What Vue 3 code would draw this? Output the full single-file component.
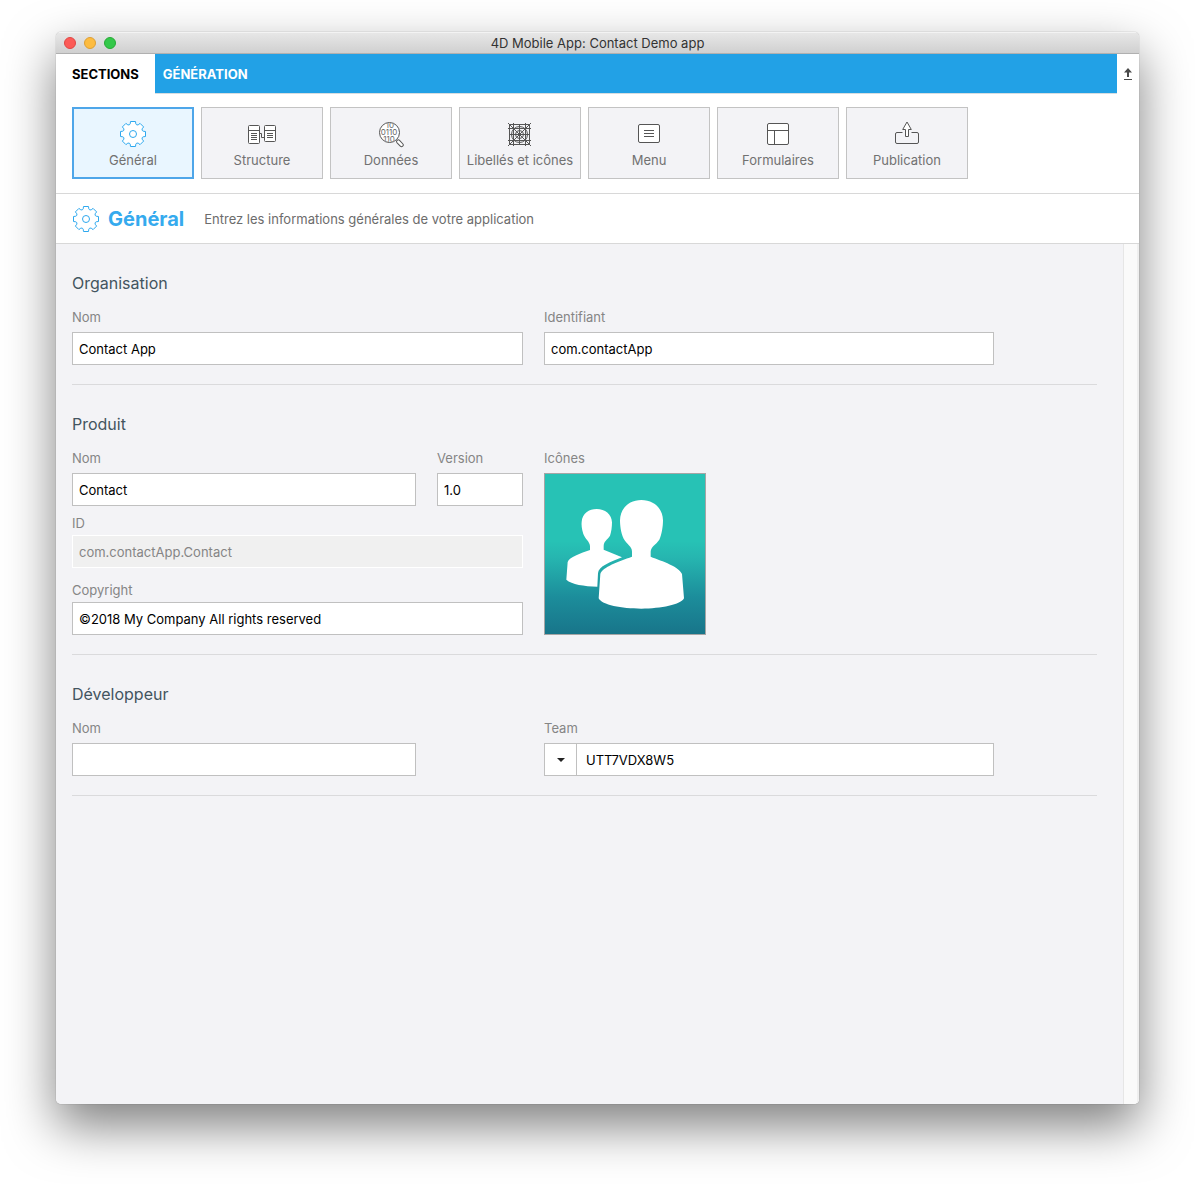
<script setup>
import { ref } from 'vue'

const sections = [
  { id: 'general', label: 'Général' },
  { id: 'structure', label: 'Structure' },
  { id: 'data', label: 'Données' },
  { id: 'labels', label: 'Libellés et icônes' },
  { id: 'menu', label: 'Menu' },
  { id: 'forms', label: 'Formulaires' },
  { id: 'publish', label: 'Publication' },
]
const current = ref('general')

const form = ref({
  orgName: 'Contact App',
  orgId: 'com.contactApp',
  productName: 'Contact',
  version: '1.0',
  productId: 'com.contactApp.Contact',
  copyright: '©2018 My Company All rights reserved',
  developer: '',
  team: 'UTT7VDX8W5',
})

// Eight-toothed gear outline centred on 0,0
const tooth = [[-3.6, -9.2], [-2.8, -10.2], [-2.5, -12.5], [2.5, -12.5], [2.8, -10.2], [3.6, -9.2]]
const gear = 'M' + Array.from({ length: 8 }, (_, k) => {
  const a = (k * Math.PI) / 4
  return tooth
    .map(([x, y]) => `${(x * Math.cos(a) - y * Math.sin(a)).toFixed(2)} ${(x * Math.sin(a) + y * Math.cos(a)).toFixed(2)}`)
    .join('L')
}).join('L') + 'Z'
</script>

<template>
  <div class="desktop">
    <div class="window">
      <header class="titlebar">
        <div class="lights">
          <button class="light close" aria-label="Fermer"></button>
          <button class="light minimize" aria-label="Réduire"></button>
          <button class="light zoom" aria-label="Agrandir"></button>
        </div>
        <span class="caption">4D Mobile App: Contact Demo app</span>
      </header>

      <nav class="tabs">
        <button class="tab active">SECTIONS</button>
        <div class="tab-rest">
          <button class="tab">GÉNÉRATION</button>
        </div>
        <button class="collapse" aria-label="Replier">
          <svg width="10" height="12" viewBox="0 0 10 12">
            <path d="M5 0L9 4.500H6V9H4V4.500H1Z" fill="#4a4a4a" />
            <path d="M1 11.500H9" stroke="#4a4a4a" />
          </svg>
        </button>
      </nav>

      <nav class="toolbar">
        <button
          v-for="s in sections"
          :key="s.id"
          class="card"
          :class="{ selected: s.id === current }"
          @click="current = s.id"
        >
          <svg class="icon" width="36" height="28" viewBox="0 0 36 28">
            <g v-if="s.id === 'general'" transform="translate(18 14)" class="blue">
              <path :d="gear" />
              <circle r="3.500" />
            </g>
            <g v-else-if="s.id === 'structure'">
              <rect x="4.500" y="5.500" width="11" height="18" rx="1" />
              <rect x="20.500" y="5.500" width="11" height="16" rx="1" />
              <path d="M4.500 10.500H15.500M7 13.500H13M7 15.500H13M7 17.500H13M7 19.500H13M20.500 10.500H31.500M23 13.500H29M23 15.500H29M23 17.500H29M16 13.500H17.500V17.500H20" />
            </g>
            <g v-else-if="s.id === 'data'">
              <clipPath id="lens"><circle cx="16.500" cy="12.500" r="9.500" /></clipPath>
              <circle cx="16.500" cy="12.500" r="10" />
              <g clip-path="url(#lens)" class="digits">
                <text x="17" y="8">10</text>
                <text x="16" y="15">0110</text>
                <text x="16" y="22">110</text>
              </g>
              <rect x="11" y="-1.700" width="8" height="3.400" rx="1.700" transform="translate(16.500 12.500) rotate(46)" />
            </g>
            <g v-else-if="s.id === 'labels'">
              <rect x="7.500" y="4.500" width="20" height="20" class="clear" />
              <path d="M11.500 3V26M17.500 4V25M23.500 3V26M6 8.500H29M7 14.500H28M6 20.500H29M6 3L29 26M29 3L6 26" />
              <circle cx="17.500" cy="14.500" r="8" class="clear" />
              <circle cx="17.500" cy="14.500" r="4" class="clear" />
            </g>
            <g v-else-if="s.id === 'menu'">
              <rect x="7.500" y="4.500" width="21" height="18" rx="1.500" />
              <path d="M13 10.500H23M13 13.500H23M13 16.500H23" />
            </g>
            <g v-else-if="s.id === 'forms'">
              <rect x="7.500" y="3.500" width="21" height="21" rx="1.500" />
              <path d="M7.500 10.500H28.500M14.500 10.500V24.500" />
            </g>
            <g v-else>
              <path class="clear" d="M13.500 12.500H8Q6.500 12.500 6.500 14V22Q6.500 23.500 8 23.500H28Q29.500 23.500 29.500 22V14Q29.500 12.500 28 12.500H22.500" />
              <path d="M18 2L22.300 9.500H19.500V16.500H16.500V9.500H13.700Z" />
            </g>
          </svg>
          <span>{{ s.label }}</span>
        </button>
      </nav>

      <div class="heading">
        <svg class="icon" width="28" height="28" viewBox="-14 -14 28 28">
          <g class="blue">
            <path :d="gear" />
            <circle r="3.500" />
          </g>
        </svg>
        <h1>Général</h1>
        <p>Entrez les informations générales de votre application</p>
      </div>

      <div class="body">
        <main class="content">
          <section>
            <h2>Organisation</h2>
            <div class="columns">
              <div class="field">
                <label for="org-name">Nom</label>
                <input id="org-name" v-model="form.orgName" type="text" />
              </div>
              <div class="field">
                <label for="org-id">Identifiant</label>
                <input id="org-id" v-model="form.orgId" type="text" />
              </div>
            </div>
          </section>

          <section>
            <h2>Produit</h2>
            <div class="columns">
              <div>
                <div class="row">
                  <div class="field grow">
                    <label for="product-name">Nom</label>
                    <input id="product-name" v-model="form.productName" type="text" />
                  </div>
                  <div class="field version">
                    <label for="version">Version</label>
                    <input id="version" v-model="form.version" type="text" />
                  </div>
                </div>
                <div class="field tight id-field">
                  <label for="product-id">ID</label>
                  <input id="product-id" :value="form.productId" type="text" disabled />
                </div>
                <div class="field tight copyright">
                  <label for="copyright">Copyright</label>
                  <input id="copyright" v-model="form.copyright" type="text" />
                </div>
              </div>
              <div class="field">
                <span id="icons-label" class="label">Icônes</span>
                <button class="app-icon" aria-labelledby="icons-label">
                  <svg viewBox="30 102 480 480">
                    <path d="M165 330L165 318C164 304 151 298 145 282C140 266 139 253 140 245C142 220 162 207 185 207C210 207 230 222 231 247C231 261 229 277 225 287C217 299 206 304 206 318L206 329L261 352C226 366 190 379 189 400L187 440C147 439 110 433 94 419L98 366C102 352 137 340 165 330Z" />
                    <path d="M291 350L291 335C291 318 276 314 266 296C257 278 255 253 255 241C256 203 284 180 319 180C356 180 383 204 384 241C384 259 380 285 373 299C362 315 348 319 347 335L347 350C383 364 433 380 441 402L447 475C438 494 378 506 319 506C260 506 200 495 191 475L196 402C202 381 251 364 291 350Z" />
                  </svg>
                </button>
              </div>
            </div>
          </section>

          <section>
            <h2>Développeur</h2>
            <div class="columns">
              <div class="field developer">
                <label for="developer">Nom</label>
                <input id="developer" v-model="form.developer" type="text" />
              </div>
              <div class="field">
                <label for="team">Team</label>
                <div class="combo">
                  <button aria-label="Choisir une équipe" aria-haspopup="listbox">
                    <svg width="8" height="4" viewBox="0 0 8 4"><path d="M0 0H8L4 4Z" fill="#222" /></svg>
                  </button>
                  <input id="team" v-model="form.team" type="text" />
                </div>
              </div>
            </div>
          </section>
        </main>
        <div class="scroll-track"></div>
      </div>
    </div>
  </div>
</template>

<style>
body {
  margin: 0;
  background: #fff;
}
</style>

<style scoped>
* {
  box-sizing: border-box;
}
.desktop {
  display: flex;
  min-height: 100vh;
  padding: 32px 56px 80px;
  font-family: Inter, "Liberation Sans", sans-serif;
  font-size: 13px;
  line-height: 16px;
  color: #000;
}
button,
input {
  font: inherit;
  border-radius: 0;
  margin: 0;
}
button {
  padding: 0;
  border: 0;
  background: none;
}
.window {
  flex: 1;
  min-width: 0;
  display: flex;
  flex-direction: column;
  overflow: hidden;
  border-radius: 5px;
  background: #fff;
  box-shadow: 0 0 1px rgba(0, 0, 0, 0.5), 0 22px 50px rgba(0, 0, 0, 0.5);
}
.titlebar {
  display: grid;
  grid-template-columns: 1fr auto 1fr;
  align-items: center;
  height: 22px;
  padding: 0 8px;
  border-bottom: 1px solid #b0b0b0;
  background: linear-gradient(#e8e8e8, #d0d0d0);
  box-shadow: inset 0 1px #f3f3f3;
}
.lights {
  display: flex;
  gap: 8px;
}
.light {
  width: 12px;
  height: 12px;
  border-radius: 50%;
  border: 1px solid;
}
.close {
  background: #fc5b57;
  border-color: #df4744;
}
.minimize {
  background: #fdbc40;
  border-color: #dd9f34;
}
.zoom {
  background: #34c84a;
  border-color: #27aa35;
}
.caption {
  color: #333;
}
.tabs {
  display: flex;
  height: 40px;
}
.tab {
  font-weight: 700;
  color: #fff;
}
.tab.active {
  padding: 0 16px;
  color: #000;
}
.tab-rest {
  flex: 1;
  display: flex;
  padding: 0 8px;
  background: #22a1e6;
  border-bottom: 1px solid #d6dde1;
}
.collapse {
  display: flex;
  align-items: center;
  justify-content: center;
  width: 22px;
}
.toolbar {
  display: flex;
  gap: 7px;
  padding: 13px 16px 14px;
  border-bottom: 1px solid #d8d8d8;
}
.card {
  display: flex;
  flex-direction: column;
  align-items: center;
  gap: 4px;
  width: 122px;
  height: 72px;
  padding-top: 12px;
  border: 1px solid #c3c3c3;
  background: #f3f3f6;
  color: #717171;
  white-space: nowrap;
}
.card.selected {
  padding-top: 11px;
  border: 2px solid #4ea6e9;
  background: #e9f6ff;
}
.icon {
  flex: none;
  fill: #fff;
  stroke: #555;
  stroke-width: 1;
  stroke-linejoin: round;
}
.icon .blue {
  stroke: #2ea8ee;
}
.icon .clear {
  fill: none;
}
.digits {
  fill: #666;
  stroke: none;
  font-size: 8px;
  text-anchor: middle;
}
.heading {
  display: flex;
  align-items: center;
  height: 50px;
  padding: 0 16px;
  border-bottom: 1px solid #d8d8d8;
}
h1 {
  margin: 0 20px 0 8px;
  font-size: 20px;
  line-height: 24px;
  font-weight: 700;
  color: #35aaee;
}
p {
  margin: 0;
  color: #6c6c6c;
}
.body {
  flex: 1;
  display: flex;
  background: #f3f3f6;
}
.content {
  flex: 1;
  min-width: 0;
  padding: 0 26px 0 16px;
}
.scroll-track {
  width: 16px;
  border-left: 1px solid #e6e6e6;
  border-right: 2px solid #efefef;
  background: #fafafa;
}
section {
  padding: 29px 0 19px;
  border-bottom: 1px solid #dadadc;
}
h2 {
  margin: 0 0 16px;
  font-size: 16px;
  line-height: 20px;
  font-weight: 400;
  color: #43555f;
}
.columns {
  display: grid;
  grid-template-columns: minmax(0, 451px) minmax(0, 450px);
  gap: 21px;
}
.row {
  display: flex;
  gap: 21px;
}
.field {
  display: flex;
  flex-direction: column;
  gap: 7px;
}
.field.tight {
  gap: 4px;
}
.grow {
  flex: 1;
  min-width: 0;
}
.version {
  width: 86px;
}
.id-field {
  margin-top: 9px;
}
.copyright {
  margin-top: 14px;
}
.developer {
  max-width: 344px;
}
label,
.label {
  color: #858585;
}
input {
  width: 100%;
  height: 33px;
  padding: 0 6px;
  border: 1px solid #c0c0c0;
  background: #fff;
  color: #000;
}
input:disabled {
  border-color: #fff;
  background: #f0f0f0;
  color: #858585;
}
.app-icon {
  width: 162px;
  height: 162px;
  border: 1px solid #a5a5a5;
  background: linear-gradient(#27c2b5 42%, #26b6b0 52%, #1c8d9b 77%, #18758a);
}
.app-icon svg {
  display: block;
  fill: #fff;
}
.combo {
  display: flex;
}
.combo button {
  display: flex;
  flex: none;
  align-items: center;
  justify-content: center;
  width: 32px;
  border: 1px solid #c0c0c0;
  border-right: 0;
  background: #fff;
}
.combo input {
  flex: 1;
  min-width: 0;
  padding: 0 9px;
}
</style>
